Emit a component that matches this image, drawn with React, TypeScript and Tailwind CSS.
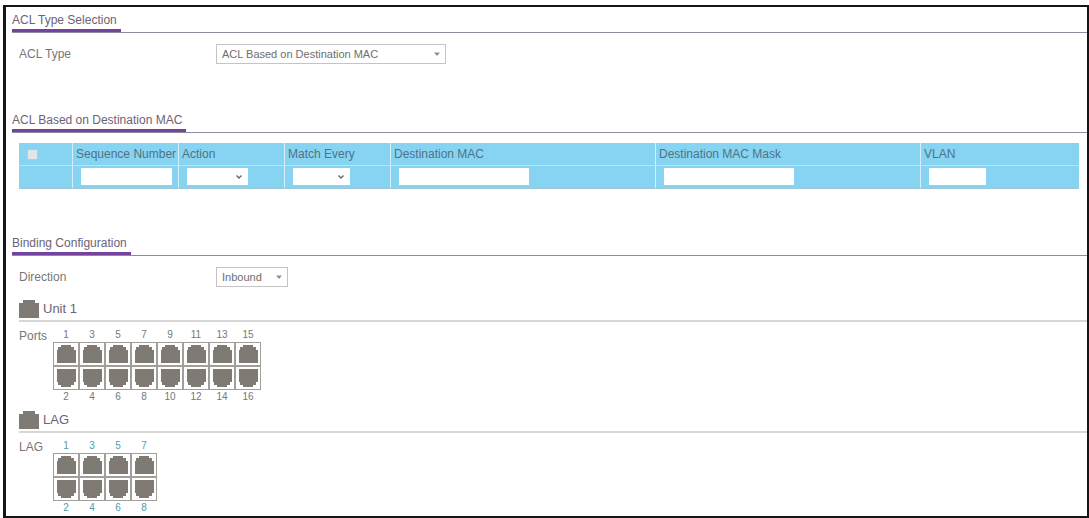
import React from 'react';
import clsx from 'clsx';

const columns = [
  { id: 'sequence', label: 'Sequence Number', width: 'w-[10%]', field: 'input', fieldWidth: 'w-[91px]' },
  { id: 'action', label: 'Action', width: 'w-[10%]', field: 'select', fieldWidth: 'w-[61px]' },
  { id: 'match', label: 'Match Every', width: 'w-[10%]', field: 'select', fieldWidth: 'w-[57px]' },
  { id: 'mac', label: 'Destination MAC', width: 'w-1/4', field: 'input', fieldWidth: 'w-[130px]' },
  { id: 'mask', label: 'Destination MAC Mask', width: 'w-1/4', field: 'input', fieldWidth: 'w-[130px]' },
  { id: 'vlan', label: 'VLAN', width: 'w-[15%]', field: 'input', fieldWidth: 'w-[57px]' },
];

function SectionHeading({ title }: { title: string }) {
  return (
    <div className="ml-1.5 flex border-b border-[#8f8b9c]">
      <h2 className="border-b-[3px] border-[#7443a0] pr-1 pb-px text-[12px] leading-4 text-[#6a6378]">{title}</h2>
    </div>
  );
}

interface SelectFieldProps {
  id: string;
  label: string;
  value: string;
  width: string;
}

function SelectField({ id, label, value, width }: SelectFieldProps) {
  return (
    <div className="mt-[11px] ml-[13px] flex h-5 items-center">
      <label htmlFor={id} className="w-[197px] text-[12px] leading-4 text-[#777]">{label}</label>
      <div className={clsx('relative', width)}>
        <select
          id={id}
          className="block h-5 w-full appearance-none border border-[#c4c4c4] bg-white pl-[5px] text-[11px] leading-4 text-[#6e6e6e]"
        >
          <option>{value}</option>
        </select>
        <svg className="pointer-events-none absolute top-2 right-1.5 h-1 w-1.5" viewBox="0 0 6 4">
          <path d="M0 0.5H6L3 4Z" fill="#909090" />
        </svg>
      </div>
    </div>
  );
}

function PortIcon({ flipped }: { flipped?: boolean }) {
  return (
    <svg className={clsx('block h-6 w-[26px]', flipped && '-scale-y-100')} viewBox="0 0 26 24">
      <rect x="0.5" y="0.5" width="25" height="23" fill="#fff" stroke="#a29f9b" />
      <path d="M8 3H18V5H21V8H23V21H4V8H5V5H8Z" fill="#7f7a74" />
    </svg>
  );
}

function UnitHeading({ title }: { title: string }) {
  return (
    <div className="ml-[13px] flex items-center gap-1 border-b-2 border-[#d6d6d6] pb-px">
      <svg className="h-5 w-5" viewBox="0 0 20 20">
        <path d="M4 1H16V4H20V19H0V4H4Z" fill="#7f7a74" />
      </svg>
      <h3 className="text-[13px] leading-4 text-[#6a6378]">{title}</h3>
    </div>
  );
}

interface PortGridProps {
  label: string;
  count: number;
  numberColor: string;
}

function PortGrid({ label, count, numberColor }: PortGridProps) {
  const pairs = Array.from({ length: count / 2 }, (_, i) => [i * 2 + 1, i * 2 + 2]);

  return (
    <div className="mt-1.5 ml-[13px] flex">
      <span className="w-[34px] text-[12px] leading-4 text-[#777]">{label}</span>
      <div className={clsx('flex text-center text-[10px] leading-[14px]', numberColor)}>
        {pairs.map(([odd, even]) => (
          <div key={odd}>
            <p>{odd}</p>
            <button type="button" aria-label={`${label} ${odd}`} className="block"><PortIcon /></button>
            <button type="button" aria-label={`${label} ${even}`} className="block"><PortIcon flipped /></button>
            <p>{even}</p>
          </div>
        ))}
      </div>
    </div>
  );
}

export default function App() {
  return (
    <div className="flex min-h-screen bg-white pt-[5px] pl-[3px] font-['Liberation_Sans',Arial,sans-serif]">
      <main className="min-w-0 flex-1 border-2 border-l-[3px] border-[#151515] pt-[5px]">
        <section>
          <SectionHeading title="ACL Type Selection" />
          <SelectField id="acl-type" label="ACL Type" value="ACL Based on Destination MAC" width="w-[230px]" />
        </section>

        <section className="mt-12">
          <SectionHeading title="ACL Based on Destination MAC" />
          <div className="mt-2.5 mr-2 ml-[13px]">
            <table className="w-full table-fixed border-separate border-spacing-0 bg-[#87d4f2] text-left text-[12px] leading-4 text-[#4d7384]">
              <thead>
                <tr>
                  <th className="h-[23px] w-[5%] border-b border-[#b5e6f8] p-0 pl-2">
                    <input
                      type="checkbox"
                      aria-label="Select all rules"
                      className="block h-[11px] w-[11px] appearance-none border border-[#b9c9d0] bg-[#dfe5e8]"
                    />
                  </th>
                  {columns.map((col) => (
                    <th
                      key={col.id}
                      id={col.id}
                      className={clsx('h-[23px] border-b border-l border-b-[#b5e6f8] border-l-[#d3f0fb] p-0 pl-[3px] font-normal whitespace-nowrap', col.width)}
                    >
                      {col.label}
                    </th>
                  ))}
                </tr>
              </thead>
              <tbody>
                <tr>
                  <td className="h-[23px] border-b-2 border-[#9fc9d8] p-0" />
                  {columns.map((col) => (
                    <td key={col.id} className="h-[23px] border-b-2 border-l border-b-[#9fc9d8] border-l-[#d3f0fb] p-0 pl-2">
                      {col.field === 'input' ? (
                        <input type="text" aria-labelledby={col.id} className={clsx('block h-[17px] bg-white', col.fieldWidth)} />
                      ) : (
                        <div className={clsx('relative', col.fieldWidth)}>
                          <select aria-labelledby={col.id} className="block h-[17px] w-full appearance-none bg-white" />
                          <svg className="pointer-events-none absolute top-[7px] right-1.5 h-1 w-1.5" viewBox="0 0 6 4">
                            <path d="M0.5 0.5L3 3L5.5 0.5" fill="none" stroke="#666" strokeWidth="1.4" />
                          </svg>
                        </div>
                      )}
                    </td>
                  ))}
                </tr>
              </tbody>
            </table>
          </div>
        </section>

        <section className="mt-[46px]">
          <SectionHeading title="Binding Configuration" />
          <SelectField id="direction" label="Direction" value="Inbound" width="w-[72px]" />

          <div className="mt-3">
            <UnitHeading title="Unit 1" />
            <PortGrid label="Ports" count={16} numberColor="text-[#777]" />
          </div>

          <div className="mt-1.5">
            <UnitHeading title="LAG" />
            <PortGrid label="LAG" count={8} numberColor="text-[#4f9bac]" />
          </div>
        </section>
      </main>
    </div>
  );
}
